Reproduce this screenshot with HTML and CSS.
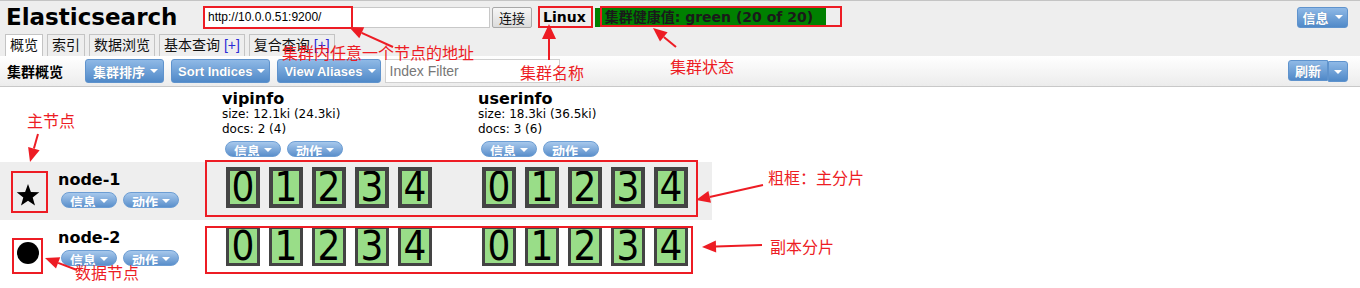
FILE: index.html
```html
<!DOCTYPE html>
<html lang="zh-CN">
<head>
    <meta charset="UTF-8">
    <title>Elasticsearch Head</title>
    <link rel="stylesheet" href="styles.css">
</head>
<body>
<div class="page">
    <header class="topbar">
        <h1 class="brand">Elasticsearch</h1>
        <input class="uri" type="text" value="http://10.0.0.51:9200/">
        <button class="btn-plain">连接</button>
        <span class="cluster-name">Linux</span>
        <span class="health">集群健康值: green (20 of 20)</span>
        <span class="spacer"></span>
        <button class="btn-blue btn-info">信息<i class="caret"></i></button>
    </header>

    <nav class="tabs">
        <a href="#" class="tab active">概览</a>
        <a href="#" class="tab">索引</a>
        <a href="#" class="tab">数据浏览</a>
        <a href="#" class="tab">基本查询 <span class="plus">[+]</span></a>
        <a href="#" class="tab">复合查询 <span class="plus">[+]</span></a>
    </nav>

    <div class="toolbar">
        <span class="toolbar-title">集群概览</span>
        <button class="btn-blue btn-tool">集群排序<i class="caret"></i></button>
        <button class="btn-blue btn-tool en">Sort Indices<i class="caret"></i></button>
        <button class="btn-blue btn-tool en">View Aliases<i class="caret"></i></button>
        <input class="filter" type="text" placeholder="Index Filter">
        <span class="spacer"></span>
        <div class="split">
            <button class="btn-blue split-main">刷新</button>
            <button class="btn-blue split-drop"><i class="caret"></i></button>
        </div>
    </div>

    <div class="cluster" id="cluster"></div>

    <!-- annotations drawn over the screenshot -->
    <svg class="marks" width="1360" height="288" viewBox="0 0 1360 288">
        <g fill="none" stroke="#ed1c24" stroke-width="2">
            <rect x="204" y="7" width="148" height="21"/>
            <rect x="539" y="7" width="53" height="20"/>
            <rect x="601" y="7" width="240" height="19"/>
            <rect x="12" y="172" width="35" height="40"/>
            <rect x="13" y="239" width="29" height="34"/>
            <rect x="206" y="161" width="491" height="55"/>
            <rect x="206" y="227" width="486" height="46"/>
            <line x1="393" y1="47" x2="361.7" y2="32.8"/>
            <line x1="549" y1="60" x2="549" y2="38"/>
            <line x1="676" y1="47" x2="663.8" y2="36.9"/>
            <line x1="38" y1="134" x2="33.9" y2="148.5"/>
            <line x1="77" y1="270" x2="58.1" y2="262.9"/>
            <line x1="763" y1="185" x2="709.7" y2="196.9"/>
            <line x1="762" y1="245" x2="716" y2="246.5"/>
        </g>
        <g fill="#ed1c24">
            <polygon points="349,27 364.2,27.3 359.3,38.3"/>
            <polygon points="549,24 556,39 542,39"/>
            <polygon points="653,28 667.6,32.3 660,41.5"/>
            <polygon points="30,162 28.1,146.9 39.6,150.2"/>
            <polygon points="45,258 60.2,257.3 56,268.5"/>
            <polygon points="696,200 708.4,191.1 711,202.8"/>
            <polygon points="702,247 715.8,240.5 716.2,252.5"/>
        </g>
    </svg>
    <span class="note note-uri">集群内任意一个节点的地址</span>
    <span class="note note-name">集群名称</span>
    <span class="note note-health">集群状态</span>
    <span class="note note-master">主节点</span>
    <span class="note note-data">数据节点</span>
    <span class="note note-primary">粗框：主分片</span>
    <span class="note note-replica">副本分片</span>
</div>

<script>
    const indices = [
        { name: 'vipinfo', size: '12.1ki (24.3ki)', docs: '2 (4)' },
        { name: 'userinfo', size: '18.3ki (36.5ki)', docs: '3 (6)' }
    ];
    const nodes = [
        { name: 'node-1', master: true },
        { name: 'node-2', master: false }
    ];

    const star = '<svg width="24" height="24" viewBox="0 0 24 24"><polygon points="12,1 14.9,8.9 23.3,9.2 16.7,14.4 19,22.5 12,17.8 5,22.5 7.3,14.4 0.7,9.2 9.1,8.9" fill="#000"/></svg>';
    const dot = '<svg width="24" height="24" viewBox="0 0 24 24"><circle cx="12" cy="12" r="11" fill="#000"/></svg>';

    function pills() {
        return `<div class="pills">
            <span class="pill">信息<i class="caret"></i></span>
            <span class="pill">动作<i class="caret"></i></span>
        </div>`;
    }

    function shards(primary) {
        let html = '<div class="shards">';
        for (let i = 0; i < 5; i++) {
            html += `<span class="shard ${primary ? 'primary' : 'replica'}">${i}</span>`;
        }
        return html + '</div>';
    }

    const cluster = document.getElementById('cluster');
    let html = '<div class="cell"></div>';
    indices.forEach(idx => {
        html += `<div class="cell index-head">
            <div class="index-name">${idx.name}</div>
            <div class="stat">size: ${idx.size}</div>
            <div class="stat">docs: ${idx.docs}</div>
            ${pills()}
        </div>`;
    });
    nodes.forEach(node => {
        const row = node.master ? ' odd' : '';
        html += `<div class="cell node${row}">
            <span class="node-icon">${node.master ? star : dot}</span>
            <div class="node-info">
                <div class="node-name">${node.name}</div>
                ${pills()}
            </div>
        </div>`;
        indices.forEach(() => {
            html += `<div class="cell shard-cell${row}">${shards(node.master)}</div>`;
        });
    });
    cluster.innerHTML = html;
</script>
</body>
</html>
```

FILE: styles.css
```css
* {
    box-sizing: border-box;
    margin: 0;
    padding: 0;
}
body {
    font-family: "DejaVu Sans", Verdana, "Noto Sans CJK SC", sans-serif;
    background-color: #fff;
    color: #000;
    width: 1360px;
    height: 288px;
    overflow: hidden;
}
.page {
    position: relative;
    height: 288px;
}
.spacer {
    flex: 1;
}

/* top bar */
.topbar {
    display: flex;
    align-items: center;
    height: 33px;
    background-color: #eee;
    border-top: 1px solid #c4c4c4;
}
.brand {
    width: 204px;
    padding-left: 6px;
    font-size: 23px;
    font-weight: bold;
    line-height: 28px;
}
.uri {
    width: 286px;
    height: 21px;
    border: 1px solid #c8c8c8;
    padding: 0 3px;
    font-family: "Liberation Sans", Arial, sans-serif;
    font-size: 12px;
    color: #000;
    outline: none;
}
.btn-plain {
    margin-left: 2px;
    width: 40px;
    height: 21px;
    border: 1px solid #a8a8a8;
    border-radius: 2px;
    background: linear-gradient(#f6f6f6, #dcdcdc);
    font-family: "Noto Sans CJK SC", sans-serif;
    font-size: 13px;
    color: #111;
}
.cluster-name {
    margin-left: 11px;
    font-size: 14px;
    font-weight: bold;
}
.health {
    margin-left: 9px;
    width: 231px;
    height: 19px;
    padding-left: 10px;
    background-color: #008000;
    color: #1a1a1a;
    font-family: "DejaVu Sans", "Noto Sans CJK SC", sans-serif;
    font-size: 14px;
    font-weight: bold;
    line-height: 19px;
    white-space: nowrap;
}
.btn-blue {
    display: inline-flex;
    align-items: center;
    justify-content: center;
    border: 1px solid #5f93cd;
    border-radius: 3px;
    background: linear-gradient(#8fb9e6, #5089c8);
    color: #fff;
    font-family: "Liberation Sans", Arial, "Noto Sans CJK SC", sans-serif;
    font-weight: bold;
    text-shadow: 0 0 1px rgba(0, 0, 0, 0.2);
}
.caret {
    display: inline-block;
    width: 0;
    height: 0;
    margin-left: 6px;
    border-left: 4px solid transparent;
    border-right: 4px solid transparent;
    border-top: 4px solid #fff;
}
.btn-info {
    width: 51px;
    height: 21px;
    margin-right: 12px;
    font-size: 13px;
}

/* tabs */
.tabs {
    display: flex;
    align-items: flex-end;
    height: 23px;
    padding-left: 5px;
    background-color: #eee;
}
.tab {
    height: 22px;
    margin-right: 4px;
    padding: 0 4px;
    border: 1px solid #c4c4c4;
    border-bottom: none;
    background-color: #eee;
    color: #111;
    font-family: "Liberation Sans", Arial, "Noto Sans CJK SC", sans-serif;
    font-size: 14px;
    line-height: 21px;
    text-decoration: none;
    white-space: nowrap;
}
.tab.active {
    background-color: #fff;
}
.tab .plus {
    color: #2b2bd6;
}

/* toolbar */
.toolbar {
    display: flex;
    align-items: center;
    height: 31px;
    padding-left: 7px;
    background: linear-gradient(#fff, #ececec);
    border-bottom: 1px solid #c8c8c8;
}
.toolbar-title {
    width: 78px;
    font-family: "Noto Sans CJK SC", sans-serif;
    font-size: 14px;
    font-weight: bold;
}
.btn-tool {
    height: 24px;
    margin-right: 7px;
    padding: 0 5px 0 7px;
    font-size: 13px;
}
.btn-tool .caret {
    margin-left: 5px;
}
.btn-tool.en {
    padding: 0 4px 0 6px;
}
.filter {
    width: 175px;
    height: 24px;
    margin-left: -3px;
    border: 1px solid #d0d0d0;
    padding: 0 4px;
    font-family: "Liberation Sans", Arial, sans-serif;
    font-size: 14px;
    outline: none;
}
.filter::placeholder {
    color: #777;
}
.split {
    display: flex;
    margin-right: 12px;
}
.split-main {
    width: 40px;
    height: 21px;
    font-size: 13px;
    border-radius: 3px 0 0 3px;
}
.split-drop {
    width: 20px;
    height: 21px;
    margin-top: 1px;
    border-radius: 0 3px 3px 0;
}
.split-drop .caret {
    margin-left: 0;
}

/* cluster overview */
.cluster {
    display: grid;
    grid-template-columns: 222px 256px 234px;
    width: 712px;
}
.index-head {
    height: 75px;
    padding-top: 3px;
}
.index-name {
    font-size: 16px;
    font-weight: bold;
    line-height: 17px;
}
.stat {
    font-size: 12px;
    line-height: 15px;
}
.pills {
    display: flex;
    gap: 6px;
    margin-top: 4px;
    margin-left: 3px;
}
.pill {
    display: inline-flex;
    justify-content: center;
    width: 56px;
    height: 16px;
    padding-top: 0;
    overflow: hidden;
    border: 1px solid #6c9dd3;
    border-radius: 8px;
    background: linear-gradient(#a7c8ec, #5a8fcb);
    color: #fff;
    font-family: "Noto Sans CJK SC", sans-serif;
    font-size: 13px;
    font-weight: bold;
    line-height: 17px;
}
.pill .caret {
    margin-left: 4px;
    margin-top: 6px;
}
.node {
    display: flex;
    align-items: flex-start;
    height: 58px;
    padding: 9px 0 0 16px;
}
.node-icon {
    width: 26px;
    margin-top: 12px;
    margin-right: 16px;
}
.node-name {
    font-size: 16px;
    font-weight: bold;
    line-height: 18px;
}
.node .pills {
    margin-top: 3px;
}
.odd {
    background-color: #eee;
}
.shard-cell {
    height: 58px;
    padding: 5px 0 0 4px;
}
.shards {
    display: flex;
    gap: 9px;
}
.shard {
    width: 34px;
    height: 41px;
    border: 4px solid #444;
    background-color: #99dd88;
    font-family: "DejaVu Sans Condensed", "DejaVu Sans", sans-serif;
    font-stretch: condensed;
    font-size: 40px;
    line-height: 33px;
    text-align: center;
    overflow: hidden;
}
.shard.replica {
    height: 40px;
    margin-top: 1px;
    border-width: 3px;
    line-height: 34px;
}

/* annotations */
.marks {
    position: absolute;
    top: 0;
    left: 0;
    pointer-events: none;
}
.note {
    position: absolute;
    color: #ed1c24;
    font-family: "Noto Sans CJK SC", sans-serif;
    font-size: 16px;
    line-height: 18px;
    white-space: nowrap;
}
.note-uri { left: 282px; top: 43px; }
.note-name { left: 520px; top: 63px; }
.note-health { left: 670px; top: 57px; }
.note-master { left: 27px; top: 111px; }
.note-data { left: 75px; top: 263px; }
.note-primary { left: 768px; top: 168px; }
.note-replica { left: 770px; top: 237px; }
```
